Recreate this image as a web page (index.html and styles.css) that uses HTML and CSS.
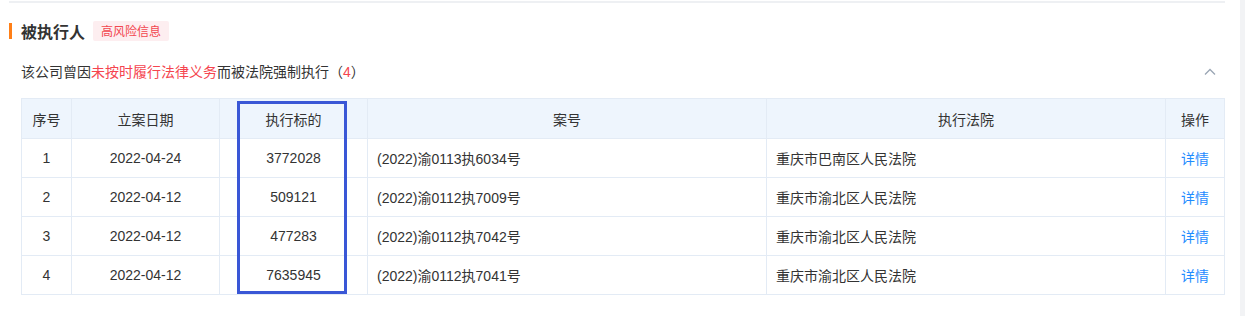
FILE: index.html
```html
<!DOCTYPE html>
<html lang="zh-CN">
<head>
<meta charset="utf-8">
<title>被执行人</title>
<link rel="stylesheet" href="styles.css">
</head>
<body>
<div class="page">
  <div class="topline"></div>
  <div class="section">
    <div class="title-row">
      <span class="bar"></span>
      <span class="title">被执行人</span>
      <span class="tag">高风险信息</span>
    </div>
    <div class="sub-row">
      <span class="sub">该公司曾因<span class="red">未按时履行法律义务</span>而被法院强制执行（<span class="red">4</span>）</span>
      <svg class="chev" width="12" height="8" viewBox="0 0 12 8"><path d="M1 6.5 L6 1.5 L11 6.5" fill="none" stroke="#9aa6b4" stroke-width="1.3"/></svg>
    </div>
    <div class="table-wrap">
      <table class="data">
        <colgroup>
          <col class="c1"><col class="c2"><col class="c3"><col class="c4"><col class="c5"><col class="c6">
        </colgroup>
        <thead>
          <tr><th>序号</th><th>立案日期</th><th>执行标的</th><th>案号</th><th>执行法院</th><th>操作</th></tr>
        </thead>
        <tbody>
          <tr><td>1</td><td>2022-04-24</td><td>3772028</td><td class="l">(2022)渝0113执6034号</td><td class="l">重庆市巴南区人民法院</td><td><a class="link">详情</a></td></tr>
          <tr><td>2</td><td>2022-04-12</td><td>509121</td><td class="l">(2022)渝0112执7009号</td><td class="l">重庆市渝北区人民法院</td><td><a class="link">详情</a></td></tr>
          <tr><td>3</td><td>2022-04-12</td><td>477283</td><td class="l">(2022)渝0112执7042号</td><td class="l">重庆市渝北区人民法院</td><td><a class="link">详情</a></td></tr>
          <tr><td>4</td><td>2022-04-12</td><td>7635945</td><td class="l">(2022)渝0112执7041号</td><td class="l">重庆市渝北区人民法院</td><td><a class="link">详情</a></td></tr>
        </tbody>
      </table>
      <div class="highlight"></div>
    </div>
  </div>
</div>
</body>
</html>
```

FILE: styles.css
```css
* { box-sizing: border-box; }
html, body { margin: 0; padding: 0; }
body {
  background: #f2f3f5;
  font-family: "Liberation Sans", "Noto Sans CJK SC", sans-serif;
  color: #333;
  width: 1245px;
  height: 316px;
  overflow: hidden;
}
.page {
  width: 1240px;
  height: 316px;
  background: #fff;
  padding-top: 1px;
}
.topline {
  margin-left: 9px;
  width: 1216px;
  height: 2px;
  background: #eef0f3;
}
.section {
  padding-left: 9px;
}
.title-row {
  display: flex;
  align-items: center;
  height: 20px;
  margin-top: 18px;
}
.bar {
  width: 3px;
  height: 16px;
  background: #ff7f17;
  margin-right: 9px;
}
.title {
  font-family: "Noto Sans CJK SC", sans-serif;
  font-size: 16px;
  font-weight: 700;
  color: #333;
  line-height: 20px;
}
.tag {
  margin-left: 8px;
  height: 20px;
  padding: 0 8px;
  background: #fdeef0;
  border-radius: 2px;
  color: #f2474f;
  font-family: "Noto Sans CJK SC", sans-serif;
  font-size: 12px;
  line-height: 20px;
}
.sub-row {
  display: flex;
  align-items: center;
  justify-content: space-between;
  width: 1215px;
  padding-left: 12px;
  padding-right: 8px;
  height: 22px;
  margin-top: 20px;
}
.sub {
  font-size: 14px;
  line-height: 22px;
  color: #333;
}
.red { color: #f5454f; }
.chev { display: block; }
.table-wrap {
  position: relative;
  margin-left: 12px;
  margin-top: 15px;
  width: 1203px;
}
.data {
  width: 1203px;
  table-layout: fixed;
  border-collapse: collapse;
  font-size: 14px;
}
.c1 { width: 50px; }
.c2 { width: 148px; }
.c3 { width: 148px; }
.c4 { width: 399px; }
.c5 { width: 399px; }
.c6 { width: 59px; }
.data th, .data td {
  border: 1px solid #e3ebf5;
  text-align: center;
  padding: 0 9px;
  white-space: nowrap;
}
.data th {
  height: 40px;
  background: #eef5fd;
  font-weight: 400;
  color: #333;
}
.data td {
  height: 39px;
  color: #333;
}
.data td.l { text-align: left; }
.link { color: #1f8cff; text-decoration: none; }
.highlight {
  position: absolute;
  left: 216px;
  top: 3px;
  width: 110px;
  height: 193px;
  border: 3px solid #3a57d6;
  pointer-events: none;
}
```
